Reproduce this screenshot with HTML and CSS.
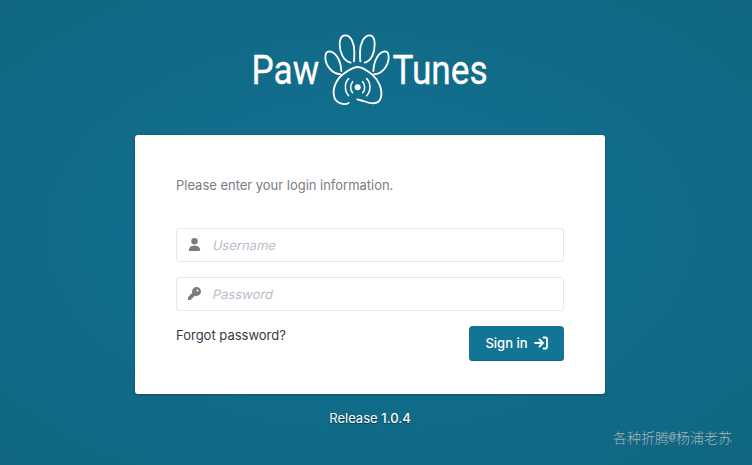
FILE: index.html
```html
<!DOCTYPE html>
<html lang="en">
<head>
<meta charset="utf-8">
<title>PawTunes</title>
<link rel="stylesheet" href="styles.css">
</head>
<body>
<main class="login">
  <svg class="logo" viewBox="240 30 260 78" role="img" aria-label="PawTunes">
    <text class="wordmark" transform="translate(251.500 84) scale(.86 1)">Paw</text>
    <text class="wordmark" transform="translate(392.500 84) scale(.86 1)">Tunes</text>
    <g class="paw" transform="translate(315 30) scale(.33333)">
      <path d="M107 98C84 92 74 66 74 43C74 27 80 16 91 16C109 16 118 42 118 66C118 78 118 85 117 94"/>
      <path d="M149 98C171 92 179 66 179 43C179 27 174 16 164 16C146 16 135 42 135 66C135 78 135 85 136 94"/>
      <path d="M77 133C49 131 31 105 31 82C31 71 35 64 43 64C61 65 77 89 79 123"/>
      <path d="M177 133C204 131 221 105 221 82C221 71 217 64 210 64C192 65 177 89 175 123"/>
      <path d="M101 219C88 226 65 221 58 202C50 177 65 147 84 133C98 122 112 111 128 111C144 111 155 121 171 133C190 149 205 179 197 205C190 227 163 220 145 213L127 208"/>
      <path class="waves" d="M101 146C88 158 88 184 101 197M113 155C105 165 105 180 113 188M155 146C168 158 168 184 155 197M143 155C151 165 151 180 143 188"/>
      <circle class="dot" cx="128" cy="172" r="9"/>
    </g>
  </svg>
  <form class="card">
    <p class="intro">Please enter your login information.</p>
    <label class="field">
      <svg class="icon" viewBox="0 0 448 512"><path d="M224 256A128 128 0 1 0 224 0a128 128 0 1 0 0 256zm-45.700 48C79.800 304 0 383.800 0 482.300C0 498.700 13.300 512 29.700 512H418.300c16.400 0 29.700-13.300 29.700-29.700C448 383.800 368.200 304 269.700 304H178.300z"/></svg>
      <input type="text" placeholder="Username">
    </label>
    <label class="field">
      <svg class="icon" viewBox="0 0 512 512"><path d="M336 352c97.200 0 176-78.800 176-176S433.200 0 336 0S160 78.800 160 176c0 18.700 2.900 36.800 8.300 53.700L7 391c-4.500 4.500-7 10.600-7 17v80c0 13.300 10.700 24 24 24h80c13.300 0 24-10.700 24-24V448h40c13.300 0 24-10.700 24-24V384h40c6.400 0 12.500-2.500 17-7l33.300-33.300c16.900 5.400 35 8.300 53.700 8.300zM376 96a40 40 0 1 1 0 80 40 40 0 1 1 0-80z"/></svg>
      <input type="password" placeholder="Password">
    </label>
    <div class="actions">
      <a class="forgot" href="#">Forgot password?</a>
      <button class="submit" type="button">Sign in
        <svg viewBox="0 0 14 14"><path d="M1 7h7.500M5.500 3.500L9 7l-3.500 3.500M9.500 1.500h2a1.500 1.500 0 0 1 1.500 1.500v8a1.500 1.500 0 0 1-1.500 1.500h-2"/></svg>
      </button>
    </div>
  </form>
  <p class="release">Release <b>1.0.4</b></p>
</main>
<div class="watermark" lang="zh-CN">各种折腾<span class="at">@</span>杨浦老苏</div>
</body>
</html>
```
FILE: styles.css
```css
* { box-sizing: border-box; }
body {
  margin: 0;
  height: 465px;
  overflow: hidden;
  background: radial-gradient(ellipse at 370px 232px, #127294 0%, #106680 100%);
  font: 13px/20px Inter, "Liberation Sans", sans-serif;
}
.login {
  width: 740px;
  display: flex;
  flex-direction: column;
  align-items: center;
  padding-top: 30px;
}
.logo { width: 260px; height: 78px; display: block; overflow: visible; }
.wordmark { font: 400 41px/1 Roboto, sans-serif; fill: #fff; stroke: #fff; stroke-width: .3; }
.paw { fill: none; stroke: #fff; stroke-width: 5.5; stroke-linecap: round; stroke-linejoin: round; }
.paw .waves { stroke-width: 4.5; }
.paw .dot { fill: #fff; stroke: none; }
.card {
  width: 470px;
  height: 259px;
  margin-top: 27px;
  padding: 40px 41px;
  background: #fff;
  border-radius: 3px;
  box-shadow: 0 1px 3px rgba(0, 0, 0, .25);
}
.intro { margin: 0 0 33px; color: #7b7b84; letter-spacing: -.02px; }
.field {
  display: flex;
  align-items: center;
  height: 34px;
  margin-bottom: 15px;
  padding-left: 11px;
  border: 1px solid #e6e8ea;
  border-radius: 3px;
}
.icon { width: 13px; height: 13px; margin: -2px 12px 0 0; fill: #7b7b84; }
.field input {
  flex: 1;
  border: 0;
  padding: 0;
  outline: 0;
  background: none;
  font: inherit;
  transform: skewX(-12deg);
}
.field input::placeholder { color: #b9bcc8; opacity: 1; }
.actions { display: flex; justify-content: space-between; align-items: flex-start; }
.forgot { color: #333a43; line-height: 18px; text-decoration: none; }
.submit {
  display: flex;
  align-items: center;
  justify-content: center;
  gap: 6px;
  width: 95px;
  height: 35px;
  padding: 0 0 2px;
  border: 0;
  border-radius: 4px;
  background: #127596;
  box-shadow: inset 0 -1px 0 #106885;
  color: #fff;
  font: 500 13px/20px Inter, "Liberation Sans", sans-serif;
}
.submit svg { width: 14px; height: 14px; fill: none; stroke: #fff; stroke-width: 1.8; stroke-linecap: round; stroke-linejoin: round; }
.release { margin: 14px 0 0; color: #fff; text-shadow: 0 1px 1px rgba(0, 0, 0, .5); }
.release b { font-weight: 500; }
.watermark {
  position: absolute;
  right: 20px;
  bottom: 18px;
  display: flex;
  color: #a9b5ba;
  font: 300 14px/20px "Noto Sans CJK SC", sans-serif;
}
.at { width: 7px; font: 11px/20px "Liberation Mono", monospace; }
```
